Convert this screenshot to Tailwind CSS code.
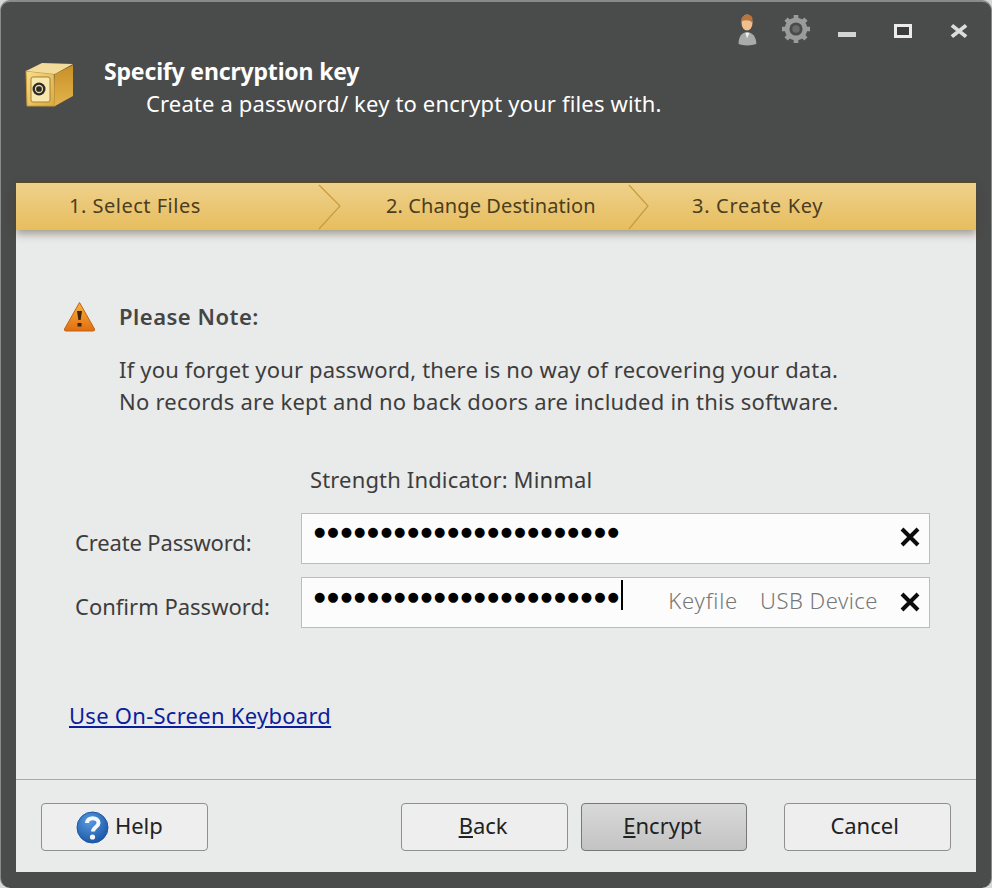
<!DOCTYPE html>
<html lang="en">
<head>
  <meta charset="UTF-8" />
  <title>Specify encryption key</title>
  <script src="https://cdn.jsdelivr.net/npm/@tailwindcss/browser@4"></script>
</head>
<body class="bg-[#d8d8d8] font-['Noto_Sans',sans-serif]">
  <div class="w-[992px] h-[888px] flex flex-col bg-[#4a4b4b] rounded-[10px] border-t-2 border-l border-r border-[#8a8a8a] overflow-hidden">

    <!-- header -->
    <header class="h-[180px] flex justify-between shrink-0">
      <div class="flex items-start pl-[24px] pt-[59px] gap-[29px]">
        <svg width="50" height="48" viewBox="0 0 50 48">
          <defs>
            <linearGradient id="safeFront" x1="0" y1="0" x2="1" y2="1">
              <stop offset="0" stop-color="#f6de8e" />
              <stop offset="1" stop-color="#d9a93d" />
            </linearGradient>
            <linearGradient id="safeSide" x1="0" y1="0" x2="0" y2="1">
              <stop offset="0" stop-color="#c98f26" />
              <stop offset="1" stop-color="#e2b44c" />
            </linearGradient>
          </defs>
          <path d="M1 10 L29 13 L30 45 L2 45 Z" fill="url(#safeFront)" stroke="#c8973a" />
          <path d="M1 10 L17 2 L48 3 L30 13 Z" fill="#f3dc9a" />
          <path d="M30 13 L48 4 L48 35 L30 45 Z" fill="url(#safeSide)" />
          <rect x="6" y="16" width="19" height="25" rx="2" fill="#f8e8ad" stroke="#a97f2a" />
          <circle cx="14" cy="28" r="6.5" fill="#2c2a25" />
          <circle cx="14" cy="28" r="3.5" fill="none" stroke="#e8d9a8" stroke-width="1.3" />
        </svg>
        <div class="text-white -mt-[3px]">
          <h1 class="text-[23px] leading-[26px] font-bold tracking-[-0.17px]">Specify encryption key</h1>
          <p class="text-[22px] leading-[30px] mt-[4px] ml-[42px] tracking-[0.16px]">Create a password/ key to encrypt your files with.</p>
        </div>
      </div>

      <div class="flex items-start pt-[12px] pr-[23px]">
        <svg width="22" height="32" viewBox="0 0 26 34" class="mr-[23px]" preserveAspectRatio="none">
          <path d="M3 32 C3 23 7 20 13 19 C19 20 24 23 24 32 C18 34 8 34 3 32 Z" fill="#a9abaa" />
          <path d="M11 20 L13 26 L16 20 Z" fill="#eef0ef" />
          <ellipse cx="13" cy="9" rx="6.5" ry="8.5" fill="#efc08d" />
          <path d="M6 8 C6 1 12 0 16 1 C20 2 20 6 19 9 C16 6 11 6 6 8 Z" fill="#b9753d" />
        </svg>
        <svg width="30" height="30" viewBox="0 0 32 32" class="mr-[27px]">
          <circle cx="16" cy="16" r="9.5" fill="none" stroke="#9a9b9b" stroke-width="5" />
          <path d="M16 1 V6 M16 26 V31 M1 16 H6 M26 16 H31 M5.4 5.4 L9 9 M23 23 L26.6 26.6 M26.6 5.4 L23 9 M9 23 L5.4 26.6" stroke="#9a9b9b" stroke-width="5" />
          <circle cx="16" cy="16" r="4" fill="#6a6b6b" />
        </svg>
        <span class="w-[18px] h-[5px] bg-[#d4d4d4] mt-[18px] mr-[38px]"></span>
        <span class="w-[18px] h-[14px] border-[3px] border-[#ececec] bg-[#3c3c3c] mt-[10px] mr-[38px]"></span>
        <svg width="18" height="14" viewBox="0 0 19 16" class="mt-[10px]" preserveAspectRatio="none">
          <path d="M2 1.5 L17 14.5 M17 1.5 L2 14.5" stroke="#dcdcdc" stroke-width="4" />
        </svg>
      </div>
    </header>

    <main class="mx-[15px] h-[690px] bg-[#e9eaea] flex flex-col shrink-0">
      <!-- steps -->
      <nav class="h-[48px] shrink-0 flex items-center bg-gradient-to-b from-[#eed18b] to-[#e7bd5d] shadow-[0_4px_8px_rgba(70,60,30,0.45)] text-[20px] leading-[26px] text-[#4b3d20] border-t border-[#5c4a22]">
        <div class="w-[326px] pl-[53px] flex justify-between items-center">
          <span class="tracking-[0.5px] -mt-[2px]">1. Select Files</span>
          <svg width="24" height="46" viewBox="0 0 24 46"><path d="M1 1 L22 22 L1 45" fill="none" stroke="#c99b3e" stroke-width="1.2" /></svg>
        </div>
        <div class="w-[308px] pl-[44px] flex justify-between items-center">
          <span class="tracking-[0.1px] -mt-[2px]">2. Change Destination</span>
          <svg width="22" height="46" viewBox="0 0 22 46"><path d="M1 1 L20 22 L1 45" fill="none" stroke="#c99b3e" stroke-width="1.2" /></svg>
        </div>
        <div class="pl-[42px]">
          <span class="tracking-[0.7px] relative -top-[1px]">3. Create Key</span>
        </div>
      </nav>

      <!-- note -->
      <section class="flex-1 text-[#3d3d3d] pt-[70px]">
        <div class="flex items-center pl-[47px] gap-[23px] h-[32px]">
          <svg width="33" height="31" viewBox="0 0 33 31">
            <defs>
              <linearGradient id="warn" x1="0" y1="0" x2="0" y2="1">
                <stop offset="0" stop-color="#f7b33c" />
                <stop offset="1" stop-color="#e26d12" />
              </linearGradient>
            </defs>
            <path d="M16.5 1.5 L31.5 28 Q32 30 30 30 H3 Q1 30 1.5 28 Z" fill="url(#warn)" stroke="#c4610f" stroke-linejoin="round" />
            <path d="M14 10 H19 L17.6 19 H15.4 Z" fill="#3d2508" />
            <rect x="14.5" y="22" width="4" height="3.5" fill="#3d2508" />
          </svg>
          <h2 class="text-[22px] font-semibold tracking-[0.5px] text-[#454545]">Please Note:</h2>
        </div>

        <div class="ml-[103px] mt-[21px] text-[22px] leading-[32px]">
          <p class="tracking-[0.17px]">If you forget your password, there is no way of recovering your data.</p>
          <p class="tracking-[0.22px]">No records are kept and no back doors are included in this software.</p>
        </div>

        <p class="ml-[294px] mt-[46px] text-[22px] leading-[32px] tracking-[0.15px]">Strength Indicator: Minmal</p>

        <div class="mt-[18px] flex flex-col gap-[13px]">
          <div class="flex items-center h-[51px]">
            <label class="w-[285px] pl-[59px] text-[22px] pt-[7px] tracking-[-0.15px]">Create Password:</label>
            <div class="w-[629px] h-[51px] bg-[#fcfcfc] border border-[#bdbdbd] flex justify-between pl-[12px] pr-[9px]">
              <span class="font-['DejaVu_Sans',sans-serif] text-[13px] leading-[36px] tracking-[2px] text-black">●●●●●●●●●●●●●●●●●●●●●●●</span>
              <svg width="20" height="20" viewBox="0 0 20 20" class="mt-[13px]"><path d="M2 2 L18 18 M18 2 L2 18" stroke="#0c0c0c" stroke-width="4" /></svg>
            </div>
          </div>
          <div class="flex items-center h-[51px]">
            <label class="w-[285px] pl-[59px] text-[22px] pt-[7px]">Confirm Password:</label>
            <div class="w-[629px] h-[51px] bg-[#fcfcfc] border border-[#bdbdbd] flex justify-between pl-[12px] pr-[9px]">
              <div class="flex items-start">
                <span class="font-['DejaVu_Sans',sans-serif] text-[13px] leading-[37px] tracking-[2px] text-black">●●●●●●●●●●●●●●●●●●●●●●●</span>
                <span class="w-[2px] h-[30px] bg-black mt-[2px]"></span>
              </div>
              <div class="flex items-start">
                <span class="text-[22px] leading-[44px] tracking-[0.8px] text-[#777] font-light mr-[22px]">Keyfile</span>
                <span class="text-[22px] leading-[44px] tracking-[0.5px] text-[#777] font-light mr-[22px]">USB Device</span>
                <svg width="20" height="20" viewBox="0 0 20 20" class="mt-[14px]"><path d="M2 2 L18 18 M18 2 L2 18" stroke="#0c0c0c" stroke-width="4" /></svg>
              </div>
            </div>
          </div>
        </div>

        <a href="#" class="block ml-[53px] mt-[71px] text-[22px] leading-[32px] tracking-[0.27px] text-[#0b1e9c] underline">Use On-Screen Keyboard</a>
      </section>

      <!-- footer buttons -->
      <footer class="h-[93px] shrink-0 border-t border-[#a9a9a9] pt-[23px] px-[25px] flex items-start text-[#222] text-[22px]">
        <button class="w-[167px] h-[48px] rounded-[4px] border border-[#8f8f8f] bg-[#eeeeee] flex items-center justify-center gap-[6px] pr-[10px] pb-[3px]">
          <svg width="33" height="33" viewBox="0 0 33 33" class="mt-[3px]">
            <defs>
              <radialGradient id="helpBlue" cx="0.4" cy="0.3" r="0.8">
                <stop offset="0" stop-color="#5a9be0" />
                <stop offset="1" stop-color="#124f9f" />
              </radialGradient>
            </defs>
            <circle cx="16.5" cy="16.5" r="15.5" fill="url(#helpBlue)" stroke="#1b57a5" />
            <path d="M11 12 C11 5.5 22.5 5.5 22.5 12 C22.5 16 17 16 17 20.5" fill="none" stroke="#f4f8fc" stroke-width="4" />
            <circle cx="16.5" cy="26" r="2.6" fill="#f4f8fc" />
          </svg>
          <span>Help</span>
        </button>
        <button class="ml-[193px] w-[167px] h-[48px] rounded-[4px] border border-[#8f8f8f] bg-[#eeeeee] pb-[3px] pr-[2px]"><span class="underline">B</span>ack</button>
        <button class="ml-[13px] w-[167px] h-[48px] rounded-[4px] border border-[#777] bg-gradient-to-b from-[#d9d9d9] to-[#c3c3c3] pb-[3px] pr-[3px]"><span class="underline">E</span>ncrypt</button>
        <button class="ml-[37px] w-[167px] h-[48px] rounded-[4px] border border-[#8f8f8f] bg-[#eeeeee] pb-[3px] pr-[6px]">Cancel</button>
      </footer>
    </main>
  </div>
</body>
</html>
